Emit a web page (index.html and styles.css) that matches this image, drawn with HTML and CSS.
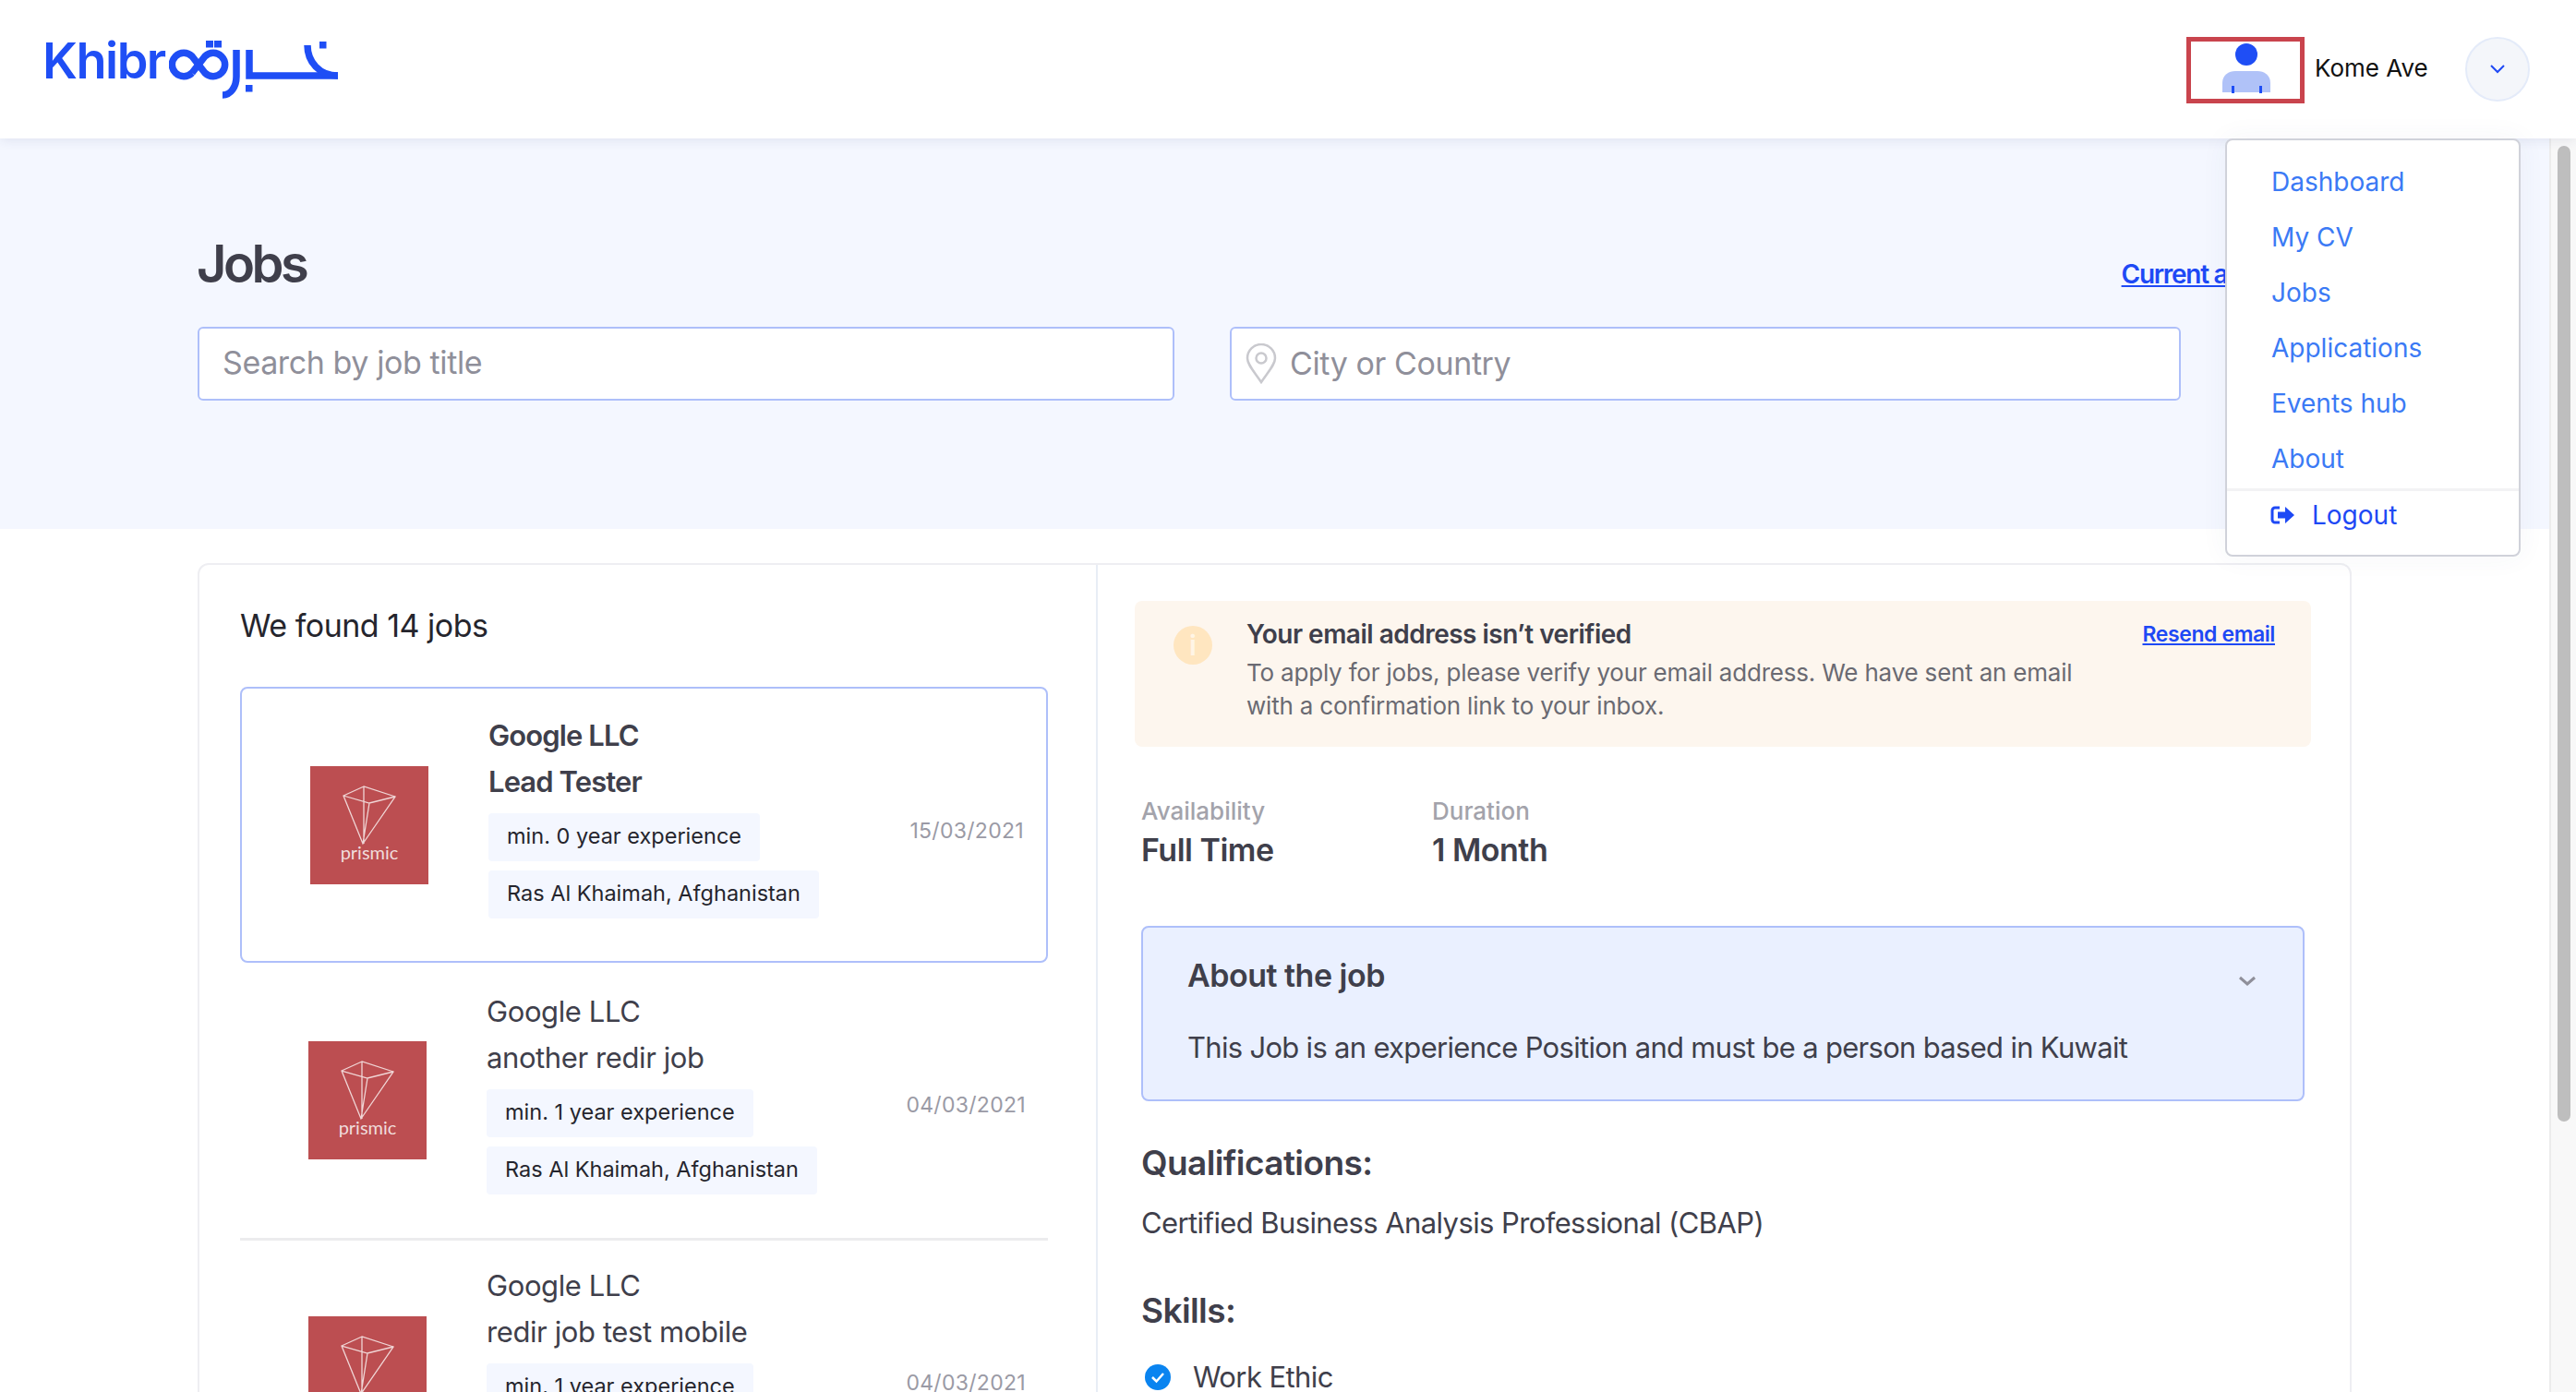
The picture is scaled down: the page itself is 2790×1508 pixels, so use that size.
FILE: index.html
```html
<!DOCTYPE html>
<html lang="en">
<head>
    <meta charset="UTF-8">
    <meta name="viewport" content="width=device-width, initial-scale=1.0">
    <title>Jobs</title>
    <link rel="stylesheet" href="styles.css">
</head>
<body>
    <header class="topbar">
        <a class="logo" href="#">
            <span class="logo-text">Khibr</span>
            <svg class="logo-mark" width="184" height="66" viewBox="183 42 184 66" fill="none" stroke="#1f4ef5" stroke-width="7.500">
                <path d="M208 79L222 61A12.700 12.700 0 1 1 222 79L208 61A12.700 12.700 0 1 0 208 79"/>
                <rect x="223" y="44" width="8" height="7.500" fill="#1f4ef5" stroke="none"/>
                <rect x="232" y="44" width="8" height="7.500" fill="#1f4ef5" stroke="none"/>
                <path d="M256 54v29c0 11-6 20-15 20"/>
                <path d="M270 54v28h96"/>
                <path d="M333 49c0 18 13 33 33 33"/>
                <rect x="266" y="92" width="7.500" height="7.500" fill="#1f4ef5" stroke="none"/>
                <rect x="346" y="45" width="7.500" height="7.500" fill="#1f4ef5" stroke="none"/>
            </svg>
        </a>
        <div class="user">
            <div class="avatar">
                <svg width="60" height="62" viewBox="0 0 60 62">
                    <ellipse cx="29" cy="14" rx="12" ry="12" fill="#1f4ef5"/>
                    <path d="M3 55v-10c0-9 7-13 14-13h24c7 0 14 4 14 13v10z" fill="#b0c2f8"/>
                    <rect x="13" y="48" width="3" height="8" fill="#1f4ef5"/>
                    <rect x="43" y="48" width="3" height="8" fill="#1f4ef5"/>
                </svg>
            </div>
            <span class="user-name">Kome Ave</span>
            <button class="user-toggle" type="button">
                <svg width="18" height="12" viewBox="0 0 18 12" fill="none" stroke="#1e49f5" stroke-width="2"><path d="M2 2l7 7 7-7"/></svg>
            </button>
        </div>
        <nav class="user-menu">
            <a href="#">Dashboard</a>
            <a href="#">My CV</a>
            <a href="#">Jobs</a>
            <a href="#">Applications</a>
            <a href="#">Events hub</a>
            <a href="#">About</a>
            <a class="logout" href="#">
                <svg width="27" height="20" viewBox="0 0 27 20">
                    <path d="M10 2H5a3 3 0 0 0-3 3v10a3 3 0 0 0 3 3h5" fill="none" stroke="#1e49f5" stroke-width="3"/>
                    <path d="M8 6.500h8V1l10 9-10 9v-5.500H8z" fill="#1e49f5"/>
                </svg>
                Logout
            </a>
        </nav>
    </header>

    <div class="layout">
        <div class="content">
            <section class="hero">
                <div class="hero-head">
                    <h1>Jobs</h1>
                    <a class="current-link" href="#">Current applications</a>
                </div>
                <div class="search-row">
                    <input class="search-title" type="text" placeholder="Search by job title">
                    <div class="search-place">
                        <svg width="34" height="44" viewBox="0 0 34 44" fill="none" stroke="#c9c9ce" stroke-width="2.500">
                            <path d="M17 42C9 30 2 23 2 16a15 15 0 0 1 30 0c0 7-7 14-15 26z"/>
                            <circle cx="17" cy="16" r="5.500"/>
                        </svg>
                        <input type="text" placeholder="City or Country">
                    </div>
                </div>
            </section>

            <main class="results">
                <div class="results-card">
                    <section class="job-list">
                        <h2>We found 14 jobs</h2>

                        <article class="job job-active">
                            <svg class="job-logo" width="128" height="128" viewBox="0 0 128 128">
                                <rect width="128" height="128" fill="#bc4e51"/>
                                <path d="M58 22L36 32l21 52 35-51zM36 32l28 8 28-7M58 22v62M64 40l-7 44" fill="none" stroke="#f0d6d6" stroke-width="1.300"/>
                                <text x="64" y="101" text-anchor="middle" class="logo-name">prismic</text>
                            </svg>
                            <div class="job-info">
                                <h3>Google LLC</h3>
                                <h3>Lead Tester</h3>
                                <span class="chip">min. 0 year experience</span>
                                <span class="chip">Ras Al Khaimah, Afghanistan</span>
                            </div>
                            <time>15/03/2021</time>
                        </article>

                        <article class="job">
                            <svg class="job-logo" width="128" height="128" viewBox="0 0 128 128">
                                <rect width="128" height="128" fill="#bc4e51"/>
                                <path d="M58 22L36 32l21 52 35-51zM36 32l28 8 28-7M58 22v62M64 40l-7 44" fill="none" stroke="#f0d6d6" stroke-width="1.300"/>
                                <text x="64" y="101" text-anchor="middle" class="logo-name">prismic</text>
                            </svg>
                            <div class="job-info">
                                <h3>Google LLC</h3>
                                <h3>another redir job</h3>
                                <span class="chip">min. 1 year experience</span>
                                <span class="chip">Ras Al Khaimah, Afghanistan</span>
                            </div>
                            <time>04/03/2021</time>
                        </article>

                        <article class="job job-ruled">
                            <svg class="job-logo" width="128" height="128" viewBox="0 0 128 128">
                                <rect width="128" height="128" fill="#bc4e51"/>
                                <path d="M58 22L36 32l21 52 35-51zM36 32l28 8 28-7M58 22v62M64 40l-7 44" fill="none" stroke="#f0d6d6" stroke-width="1.300"/>
                                <text x="64" y="101" text-anchor="middle" class="logo-name">prismic</text>
                            </svg>
                            <div class="job-info">
                                <h3>Google LLC</h3>
                                <h3>redir job test mobile</h3>
                                <span class="chip">min. 1 year experience</span>
                                <span class="chip">Ras Al Khaimah, Afghanistan</span>
                            </div>
                            <time>04/03/2021</time>
                        </article>
                    </section>

                    <section class="job-detail">
                        <div class="notice">
                            <span class="notice-icon">i</span>
                            <div class="notice-text">
                                <h4>Your email address isn’t verified</h4>
                                <p>To apply for jobs, please verify your email address. We have sent an email with a confirmation link to your inbox.</p>
                            </div>
                            <a href="#">Resend email</a>
                        </div>

                        <div class="facts">
                            <div class="fact fact-first">
                                <span>Availability</span>
                                <strong>Full Time</strong>
                            </div>
                            <div class="fact">
                                <span>Duration</span>
                                <strong>1 Month</strong>
                            </div>
                        </div>

                        <div class="about">
                            <div class="about-head">
                                <h3>About the job</h3>
                                <svg width="20" height="12" viewBox="0 0 20 12" fill="none" stroke="#8f8f9a" stroke-width="3"><path d="M2 2l8 7 8-7"/></svg>
                            </div>
                            <p>This Job is an experience Position and must be a person based in Kuwait</p>
                        </div>

                        <h3 class="detail-title">Qualifications:</h3>
                        <p class="detail-text">Certified Business Analysis Professional (CBAP)</p>

                        <h3 class="detail-title skills-title">Skills:</h3>
                        <div class="skill">
                            <svg width="28" height="28" viewBox="0 0 28 28">
                                <circle cx="14" cy="14" r="14" fill="#0a84f0"/>
                                <path d="M8 14l4.500 4.500L20 10" fill="none" stroke="#fff" stroke-width="2.500"/>
                            </svg>
                            Work Ethic
                        </div>
                    </section>
                </div>
            </main>
        </div>
        <div class="scrollbar"><div class="scrollbar-thumb"></div></div>
    </div>
</body>
</html>
```

FILE: styles.css
```css
* {
    box-sizing: border-box;
}
html, body {
    height: 100%;
    margin: 0;
    overflow: hidden;
}
body {
    font-family: Inter, "Noto Sans", sans-serif;
    background-color: #fff;
    color: #3f3f4b;
}
h1, h2, h3, h4, p {
    margin: 0;
}
a {
    color: #1e49f5;
}

/* top bar */
.topbar {
    position: relative;
    z-index: 2;
    height: 150px;
    padding: 40px 50px 0;
    display: flex;
    justify-content: space-between;
    background: #fff;
    box-shadow: 0 2px 12px rgba(40, 50, 110, 0.1);
}
.logo {
    display: flex;
    align-items: flex-start;
    height: 68px;
    text-decoration: none;
}
.logo-text {
    width: 137px;
    margin: -8px 0 0 -4px;
    font-size: 54px;
    line-height: 68px;
    font-weight: 600;
    letter-spacing: -1.5px;
    color: #1f4ef5;
}
.logo-mark {
    margin-top: 2px;
}
.user {
    display: flex;
    align-items: flex-start;
}
.avatar {
    width: 128px;
    height: 72px;
    padding-left: 31px;
    border: 5px solid #c9444d;
}
.user-name {
    width: 163px;
    margin-left: 11px;
    padding-top: 18px;
    font-size: 26px;
    line-height: 32px;
    color: #111;
}
.user-toggle {
    width: 70px;
    height: 70px;
    padding: 3px 0 0;
    background: #f4f6fa;
    border: 2px solid #e4ebf9;
    border-radius: 50%;
}
.user-menu {
    position: absolute;
    top: 150px;
    left: 2410px;
    width: 320px;
    height: 453px;
    padding-top: 17px;
    display: flex;
    flex-direction: column;
    background: #fff;
    border: 2px solid #d0d2da;
    border-radius: 8px;
    box-shadow: 0 0 30px rgba(60, 70, 120, 0.05);
}
.user-menu a {
    height: 60px;
    padding-left: 48px;
    font-size: 28px;
    line-height: 57px;
    text-decoration: none;
    color: #3b7af5;
}
.user-menu .logout {
    height: 54px;
    padding-left: 47px;
    display: flex;
    align-items: center;
    gap: 18px;
    line-height: 1;
    border-top: 3px solid #f2f2f4;
    color: #1e49f5;
}

.layout {
    display: flex;
    height: calc(100% - 150px);
}
.content {
    flex: 1;
    min-width: 0;
}
.scrollbar {
    width: 29px;
    padding: 8px 6px 0 7px;
    background: #f8f8f8;
    border-left: 2px solid #ececec;
}
.scrollbar-thumb {
    height: 1057px;
    background: #bebebe;
    border-radius: 8px;
}

/* hero */
.hero {
    height: 423px;
    padding: 96px 214px 0;
    background: #f4f7ff;
}
.hero-head {
    height: 108px;
    display: flex;
    justify-content: space-between;
    align-items: flex-start;
}
.hero-head h1 {
    margin-left: -1px;
    font-size: 56px;
    line-height: 80px;
    font-weight: 600;
    letter-spacing: -3.5px;
}
.current-link {
    margin-top: 34px;
    font-size: 28px;
    font-weight: 600;
    letter-spacing: -1.3px;
}
.search-row {
    display: flex;
    gap: 60px;
}
.search-row input {
    padding-bottom: 3px;
    font-family: inherit;
    font-size: 34px;
    letter-spacing: -0.4px;
    color: #3f3f4b;
    outline: none;
}
.search-row input::placeholder {
    color: #8f8f9a;
    opacity: 1;
}
.search-title {
    width: 1058px;
    height: 80px;
    padding: 0 25px;
    background: #fff;
    border: 2px solid #aebffa;
    border-radius: 6px;
}
.search-place {
    width: 1030px;
    height: 80px;
    padding-left: 15px;
    display: flex;
    align-items: center;
    gap: 14px;
    background: #fff;
    border: 2px solid #aebffa;
    border-radius: 6px;
}
.search-place input {
    flex: 1;
    min-width: 0;
    padding-left: 0;
    border: none;
}

/* results */
.results {
    padding: 37px 214px 0;
}
.results-card {
    height: 1000px;
    display: flex;
    border: 2px solid #eeeef2;
    border-radius: 12px;
}
.job-list {
    width: 973px;
    padding: 0 52px 0 44px;
    border-right: 2px solid #e8edf5;
}
.job-list h2 {
    height: 132px;
    padding-top: 44px;
    font-size: 34px;
    line-height: 44px;
    font-weight: 400;
    letter-spacing: -0.5px;
    color: #25252d;
}
.job {
    height: 298px;
    padding-left: 74px;
    display: flex;
    align-items: center;
    position: relative;
}
.job-active {
    height: 299px;
    border: 2px solid #aebffa;
    border-radius: 8px;
}
.job-ruled {
    padding-bottom: 4px;
    border-top: 3px solid #ececee;
}
.job-logo {
    flex: none;
}
.logo-name {
    font-family: Lato, sans-serif;
    font-size: 20px;
    font-weight: 400;
    fill: #f0dcdc;
}
.job-info {
    margin: 0 0 20px 65px;
    display: flex;
    flex-direction: column;
    align-items: flex-start;
}
.job-info h3 {
    font-size: 31px;
    line-height: 50px;
    font-weight: 400;
    letter-spacing: -0.4px;
}
.job-active .job-info h3 {
    font-weight: 600;
    letter-spacing: -0.9px;
}
.chip {
    height: 52px;
    margin-top: 10px;
    padding: 0 20px;
    font-size: 23.500px;
    line-height: 50px;
    color: #25252d;
    background: #f4f7ff;
    border-radius: 4px;
}
.job-info h3 + .chip {
    margin-top: 9px;
}
.job time {
    position: absolute;
    right: 24px;
    top: 139px;
    font-size: 23px;
    line-height: 30px;
    letter-spacing: 0.3px;
    color: #9a9aa5;
}

/* detail */
.job-detail {
    flex: 1;
    min-width: 0;
    padding: 39px 42px 0 40px;
}
.notice {
    height: 158px;
    padding: 20px 39px 0 42px;
    display: flex;
    align-items: flex-start;
    background: #fdf6ee;
    border-radius: 8px;
}
.notice-icon {
    flex: none;
    width: 42px;
    height: 42px;
    margin-top: 7px;
    font-size: 30px;
    line-height: 42px;
    font-weight: 600;
    text-align: center;
    color: #fff5e6;
    background: #ffe6c0;
    border-radius: 50%;
}
.notice-text {
    width: 930px;
    margin-left: 37px;
}
.notice-text h4 {
    font-size: 28px;
    line-height: 32px;
    font-weight: 600;
    letter-spacing: -0.5px;
}
.notice-text p {
    margin-top: 8px;
    font-size: 26px;
    line-height: 36px;
    letter-spacing: -0.2px;
    color: #6a6a72;
}
.notice > a {
    margin-left: auto;
    padding-top: 2px;
    font-size: 23px;
    font-weight: 600;
    letter-spacing: -0.4px;
}
.facts {
    margin: 50px 0 0 7px;
    display: flex;
}
.fact {
    display: flex;
    flex-direction: column;
}
.fact-first {
    width: 315px;
}
.fact span {
    font-size: 26px;
    line-height: 40px;
    font-weight: 500;
    color: #a3a3ab;
}
.fact strong {
    font-size: 34px;
    line-height: 44px;
    font-weight: 600;
    letter-spacing: -0.5px;
}
.about {
    height: 190px;
    margin: 60px 0 0 7px;
    width: 1260px;
    padding: 28px 50px 0 48px;
    background: #eaf0ff;
    border: 2px solid #aebffa;
    border-radius: 8px;
}
.about-head {
    display: flex;
    justify-content: space-between;
    align-items: center;
}
.about-head h3 {
    font-size: 34px;
    line-height: 48px;
    font-weight: 600;
    letter-spacing: -0.5px;
}
.about-head svg {
    margin-top: 12px;
}
.about p {
    margin-top: 32px;
    font-size: 31px;
    line-height: 44px;
    letter-spacing: -0.7px;
}
.detail-title {
    margin: 42px 0 0 7px;
    font-size: 37px;
    line-height: 50px;
    font-weight: 600;
    letter-spacing: -0.6px;
}
.detail-text {
    margin: 18px 0 0 7px;
    font-size: 31px;
    line-height: 44px;
    letter-spacing: -0.6px;
}
.skills-title {
    margin-top: 48px;
}
.skill {
    margin: 25px 0 0 11px;
    display: flex;
    align-items: center;
    gap: 24px;
    font-size: 31px;
    line-height: 44px;
    letter-spacing: -0.6px;
}
```
